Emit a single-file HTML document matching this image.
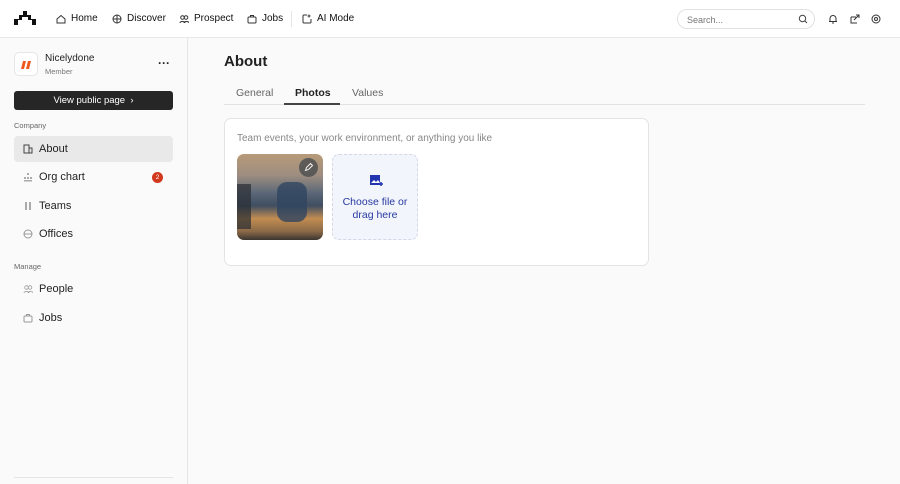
<!DOCTYPE html>
<html><head><style>
*{box-sizing:border-box;margin:0;padding:0}
body{width:900px;height:484px;background:#fafafa;font-family:"Liberation Sans",sans-serif;color:#222;position:relative;overflow:hidden}
.hdr{position:absolute;left:0;top:0;width:900px;height:38px;background:#fff;border-bottom:1px solid #e8e8e8}
.nav{position:absolute;top:13px;font-size:10px;color:#111;display:flex;align-items:center;gap:5px}
.nav svg{width:10px;height:10px}
.side{position:absolute;left:0;top:38px;width:188px;height:446px;border-right:1px solid #e6e6e6;background:#fafafa}
.item{position:absolute;left:14px;width:159px;height:26px;border-radius:4px;font-size:11px;display:flex;align-items:center;padding-left:25px;color:#222}
.item svg{position:absolute;left:9px;top:8px;width:10px;height:10px}
.lbl{position:absolute;left:14px;font-size:7.5px;color:#666}
</style></head><body>
<div class="hdr">
<svg style="position:absolute;left:14px;top:11px" width="22" height="14" viewBox="0 0 22 14"><path d="M0 8h5V4h4V0h4v4h4v4h5v6h-4v-5h-4V6H8v3H4v5H0z" fill="#111"/></svg>
<div class="nav" style="left:56px"><svg viewBox="0 0 10 10" fill="none" stroke="#333" stroke-width="1"><path d="M1 5L5 1.5 9 5v4H1z"/></svg>Home</div>
<div class="nav" style="left:112px"><svg viewBox="0 0 10 10" fill="none" stroke="#333" stroke-width="1"><circle cx="5" cy="5" r="4"/><path d="M1 5h8M5 1v8"/></svg>Discover</div>
<div class="nav" style="left:179px"><svg viewBox="0 0 10 10" fill="none" stroke="#333" stroke-width="1"><circle cx="3.5" cy="3.5" r="1.8"/><circle cx="7" cy="3.5" r="1.8"/><path d="M1 9c0-2 5-2 5 0M5 9c0-2 5-2 5 0"/></svg>Prospect</div>
<div class="nav" style="left:247px"><svg viewBox="0 0 10 10" fill="none" stroke="#333" stroke-width="1"><rect x="1" y="3" width="8" height="6" rx="1"/><path d="M3.5 3V1.5h3V3"/></svg>Jobs</div>
<div style="position:absolute;left:291px;top:11px;width:1px;height:16px;background:#e5e5e5"></div>
<div class="nav" style="left:302px"><svg viewBox="0 0 10 10" fill="none" stroke="#333" stroke-width="1"><path d="M5 1H2a1 1 0 0 0-1 1v6a1 1 0 0 0 1 1h6a1 1 0 0 0 1-1V5M7 0.5v3M5.5 2h3"/></svg>AI Mode</div>
<div style="position:absolute;left:677px;top:9px;width:138px;height:20px;border:1px solid #e2e2e2;border-radius:10px;font-size:9px;color:#777;padding:5px 9px">Search...<svg style="position:absolute;right:6px;top:4px" width="10" height="10" viewBox="0 0 10 10" fill="none" stroke="#444"><circle cx="4.5" cy="4.5" r="3.2"/><path d="M7 7l2 2"/></svg></div>
<svg style="position:absolute;left:828px;top:14px" width="10" height="10" viewBox="0 0 10 10" fill="none" stroke="#333"><path d="M2 7.5V4.5a3 3 0 0 1 6 0v3zM1 7.5h8M4 9h2"/></svg>
<svg style="position:absolute;left:850px;top:14px" width="10" height="10" viewBox="0 0 10 10" fill="none" stroke="#333"><path d="M1 3h5M1 3v6h6M4 6l5-5M6 1h3v3"/></svg>
<svg style="position:absolute;left:871px;top:14px" width="10" height="10" viewBox="0 0 10 10" fill="none" stroke="#333"><circle cx="5" cy="5" r="4"/><circle cx="5" cy="5" r="1.5"/></svg>
</div>
<div class="side">
<div style="position:absolute;left:14px;top:14px;width:24px;height:24px;border:1px solid #e5e5e5;border-radius:5px;background:#fff"><svg width="24" height="24" viewBox="0 0 24 24"><path d="M8 8h3l-2 8H6zM13 8h3l-2 8h-3z" fill="#ee5a1c"/></svg></div>
<div style="position:absolute;left:45px;top:15px;font-size:10px;color:#222">Nicelydone</div>
<div style="position:absolute;left:45px;top:29px;font-size:7.5px;color:#777">Member</div>
<div style="position:absolute;left:158px;top:18px;font-size:12px;font-weight:bold">···</div>
<div style="position:absolute;left:14px;top:53px;width:159px;height:19px;background:#262626;border-radius:3px;color:#fff;font-size:9.5px;text-align:center;line-height:19px">View public page &nbsp;›</div>
<div class="lbl" style="top:83px">Company</div>
<div class="item" style="top:98px;background:#e9e9e9"><svg viewBox="0 0 10 10" fill="none" stroke="#444"><rect x="1" y="1" width="5" height="8"/><rect x="6" y="4" width="3" height="5"/></svg>About</div>
<div class="item" style="top:126px"><svg viewBox="0 0 10 10" fill="#aaa"><rect x="4" y="1" width="2" height="2"/><rect x="1" y="5" width="2" height="2"/><rect x="4" y="5" width="2" height="2"/><rect x="7" y="5" width="2" height="2"/><rect x="1" y="8" width="8" height="1.5"/></svg>Org chart<div style="position:absolute;left:138px;top:8px;width:11px;height:11px;border-radius:50%;background:#d1381c;color:#fff;font-size:6.5px;text-align:center;line-height:11px">2</div></div>
<div class="item" style="top:155px"><svg viewBox="0 0 10 10" fill="#aaa"><rect x="2" y="1" width="2" height="8"/><rect x="6" y="1" width="2" height="8"/></svg>Teams</div>
<div class="item" style="top:183px"><svg viewBox="0 0 10 10" fill="none" stroke="#999"><circle cx="5" cy="5" r="4"/><path d="M1 5h8"/></svg>Offices</div>
<div class="lbl" style="top:224px">Manage</div>
<div class="item" style="top:238px"><svg viewBox="0 0 10 10" fill="none" stroke="#999" stroke-width=".8"><circle cx="3.5" cy="3.5" r="1.8"/><circle cx="7" cy="3.5" r="1.8"/><path d="M1 9c0-2 5-2 5 0M5 9c0-2 5-2 5 0"/></svg>People</div>
<div class="item" style="top:267px"><svg viewBox="0 0 10 10" fill="none" stroke="#999"><rect x="1" y="3" width="8" height="6" rx="1"/><path d="M3.5 3V1.5h3V3"/></svg>Jobs</div>
<div style="position:absolute;left:14px;top:439px;width:159px;height:1px;background:#e5e5e5"></div>
</div>
<div style="position:absolute;left:224px;top:53px;font-size:15px;font-weight:bold;color:#222">About</div>
<div style="position:absolute;left:224px;top:104px;width:641px;height:1px;background:#e2e2e2"></div>
<div style="position:absolute;left:236px;top:87px;font-size:10.5px;color:#666">General</div>
<div style="position:absolute;left:295px;top:87px;font-size:10.5px;color:#222;font-weight:bold">Photos</div>
<div style="position:absolute;left:284px;top:103px;width:56px;height:2px;background:#444"></div>
<div style="position:absolute;left:352px;top:87px;font-size:10.5px;color:#666">Values</div>
<div style="position:absolute;left:224px;top:118px;width:425px;height:148px;background:#fff;border:1px solid #e3e3e3;border-radius:7px">
<div style="position:absolute;left:12px;top:14px;font-size:10px;color:#888">Team events, your work environment, or anything you like</div>
<div style="position:absolute;left:12px;top:35px;width:86px;height:86px;border-radius:7px;overflow:hidden;background:linear-gradient(180deg,#b89a78 0%,#9d8d80 25%,#5c6878 45%,#3f4e62 60%,#c28c50 75%,#8a6a48 90%,#3a3530 100%)">
<div style="position:absolute;left:0;top:30px;width:14px;height:45px;background:#2a2e33;opacity:.7"></div>
<div style="position:absolute;left:40px;top:28px;width:30px;height:40px;background:#2f4560;border-radius:10px;opacity:.8"></div>
<div style="position:absolute;left:62px;top:4px;width:19px;height:19px;border-radius:50%;background:#555;opacity:.9"><svg width="19" height="19" viewBox="0 0 19 19" fill="none" stroke="#fff"><path d="M6.5 12.5l1-3 4-4 2 2-4 4z"/></svg></div>
</div>
<div style="position:absolute;left:107px;top:35px;width:86px;height:86px;border-radius:7px;border:1px dashed #d3d7e6;background:#f3f5fc;text-align:center;color:#2639a0;font-size:10.5px;line-height:12.5px;padding-top:41px">Choose file or<br>drag here
<svg style="position:absolute;left:36px;top:19px" width="14" height="14" viewBox="0 0 14 14"><rect x="1" y="1" width="10" height="10" fill="#2135b0"/><path d="M2 9l3-3 2 2 2-2 2 3z" fill="#fff"/><path d="M10 10h4M12 8v4" stroke="#2135b0" stroke-width="1.5"/></svg></div>
</div>
</body></html>
